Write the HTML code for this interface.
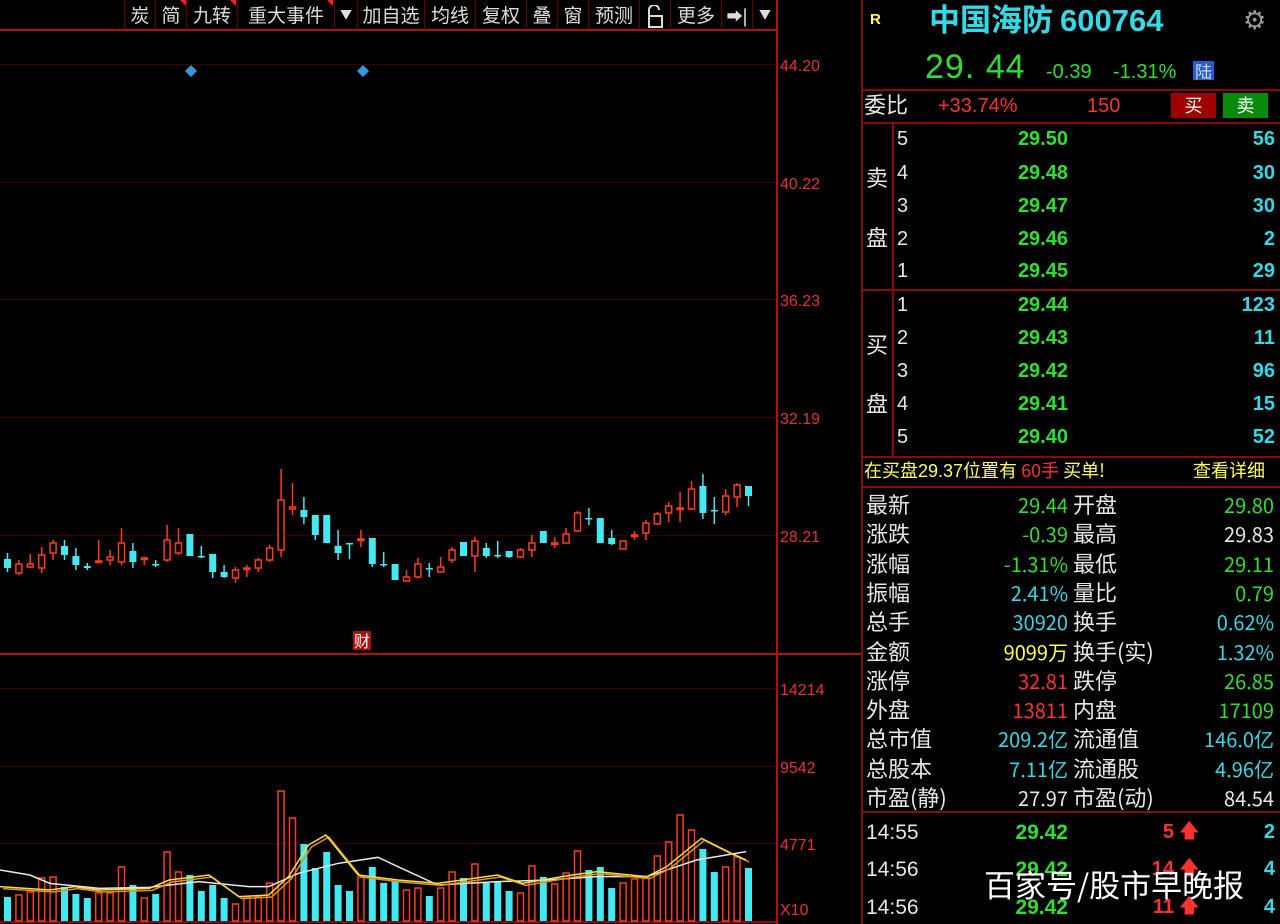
<!DOCTYPE html>
<html><head><meta charset="utf-8"><style>
html,body{margin:0;padding:0;background:#000;width:1280px;height:924px;overflow:hidden;position:relative;font-family:"Liberation Sans","Noto Sans CJK SC",sans-serif}
.t{position:absolute;white-space:nowrap;line-height:1}
.cn{font-family:"Noto Sans CJK SC","WenQuanYi Zen Hei",sans-serif}
.w{color:#e6e6e6}.g{color:#2ee02e}.c{color:#33d9e6}.r{color:#ff3030}.y{color:#ffff55}
.rr{text-align:right}
.b{font-weight:bold}
.tb{position:absolute;top:0;height:30px;line-height:30px;color:#ddd;font-size:19px;font-family:"Noto Sans CJK SC",sans-serif;text-align:center;border-left:1px solid #600;}
.hl{position:absolute;height:2px;background:#8a0a0a}
.vl{position:absolute;width:2px;background:#8a0a0a}
</style></head><body>
<svg id="ch" width="862" height="924" style="position:absolute;left:0;top:0">
<g stroke="#3a0000" stroke-width="1">
<line x1="0" y1="64.5" x2="776" y2="64.5"/><line x1="0" y1="182.5" x2="776" y2="182.5"/><line x1="0" y1="299.5" x2="776" y2="299.5"/><line x1="0" y1="417.5" x2="776" y2="417.5"/><line x1="0" y1="535.5" x2="776" y2="535.5"/>
<line x1="0" y1="688.5" x2="776" y2="688.5"/><line x1="0" y1="766.5" x2="776" y2="766.5"/><line x1="0" y1="843.5" x2="776" y2="843.5"/>
</g>
<line x1="0" y1="30" x2="778" y2="30" stroke="#b01010" stroke-width="2"/>
<line x1="0" y1="654" x2="862" y2="654" stroke="#b01010" stroke-width="2"/>
<line x1="777" y1="0" x2="777" y2="924" stroke="#b01010" stroke-width="2"/>
<line x1="0" y1="922" x2="776" y2="922" stroke="#8a0a0a" stroke-width="2"/>
<g fill="#e83030" font-size="16" font-family="Liberation Sans">
<text x="780" y="71">44.20</text><text x="780" y="189">40.22</text><text x="780" y="306">36.23</text><text x="780" y="424">32.19</text><text x="780" y="542">28.21</text>
<text x="780" y="695">14214</text><text x="780" y="773">9542</text><text x="780" y="850">4771</text><text x="780" y="915">X10</text>
</g>
<path d="M191 65 L197 71 L191 77 L185 71Z M363 65 L369 71 L363 77 L357 71Z" fill="#3399dd"/>
<rect x="353" y="631" width="18" height="19" fill="#b01010"/>
<text x="354" y="647" fill="#fff" font-size="16" font-family="Noto Sans CJK SC">财</text>
<g id="cd"></g><g id="vb"></g><g id="ma"></g>
</svg>
<div class="tb" style="left:124px;width:30px">炭</div>
<div class="tb" style="left:155px;width:30px">简</div>
<div class="tb" style="left:186px;width:50px">九转</div>
<div class="tb" style="left:237px;width:96px">重大事件</div>
<div class="tb" style="left:334px;width:22px;font-size:12px">▼</div>
<div class="tb" style="left:357px;width:66px">加自选</div>
<div class="tb" style="left:424px;width:50px">均线</div>
<div class="tb" style="left:475px;width:50px">复权</div>
<div class="tb" style="left:526px;width:30px">叠</div>
<div class="tb" style="left:557px;width:30px">窗</div>
<div class="tb" style="left:588px;width:50px">预测</div>
<div class="tb" style="left:639px;width:30px"><svg width="20" height="24" style="vertical-align:middle"><path d="M4 11 V5 a5 5 0 0 1 10 0" fill="none" stroke="#ddd" stroke-width="2"/><rect x="4" y="11" width="13" height="11" fill="none" stroke="#ddd" stroke-width="2"/></svg></div>
<div class="tb" style="left:670px;width:50px">更多</div>
<div class="tb" style="left:721px;width:30px;font-size:16px;font-weight:bold">➡|</div>
<div class="tb" style="left:752px;width:24px;font-size:12px">▼</div>
<svg width="680" height="12" style="position:absolute;left:124px;top:0">
<path d="M56 0 L62 0 L62 6Z M106 0 L112 0 L112 6Z M203 0 L209 0 L209 6Z" fill="#ff2020"/></svg>

<div class="vl" style="left:861px;top:0;height:924px"></div>
<div class="t y" style="left:870px;top:12px;font-size:15px;font-weight:bold">R</div>
<div class="t c cn b" style="left:929px;top:2px;font-size:31px">中国海防 <span style="font-family:'Liberation Sans'">600764</span></div>
<div class="t" style="left:1243px;top:7px;font-size:26px;color:#999">⚙</div>
<div class="t g" style="left:925px;top:50px;font-size:34px;letter-spacing:1px">29. 44</div>
<div class="t g" style="left:1046px;top:62px;font-size:20px">-0.39</div>
<div class="t g" style="left:1113px;top:62px;font-size:20px">-1.31%</div>
<div class="t cn" style="left:1193px;top:61px;font-size:17px;background:#2a5ad0;color:#cde;padding:1px 2px">陆</div>
<div class="hl" style="left:862px;top:89px;width:418px"></div>
<div class="t w cn" style="left:864px;top:93px;font-size:22px">委比</div>
<div class="t r" style="left:938px;top:96px;font-size:20px">+33.74%</div>
<div class="t r" style="left:1087px;top:96px;font-size:20px">150</div>
<div class="t cn" style="left:1171px;top:93px;width:45px;height:25px;background:#a00000;color:#fff;font-size:18px;text-align:center;line-height:25px">买</div>
<div class="t cn" style="left:1223px;top:93px;width:45px;height:25px;background:#0a8a0a;color:#fff;font-size:18px;text-align:center;line-height:25px">卖</div>
<div class="hl" style="left:862px;top:122px;width:418px"></div>
<div class="hl" style="left:862px;top:289px;width:418px"></div>
<div class="hl" style="left:862px;top:456px;width:418px"></div>
<div class="hl" style="left:862px;top:486px;width:418px"></div>
<div class="hl" style="left:862px;top:811px;width:418px"></div>
<div class="vl" style="left:892px;top:123px;height:333px"></div>
<div class="t w cn" style="left:866px;top:166px;font-size:22px">卖</div>
<div class="t w cn" style="left:866px;top:226px;font-size:22px">盘</div>
<div class="t w cn" style="left:866px;top:333px;font-size:22px">买</div>
<div class="t w cn" style="left:866px;top:392px;font-size:22px">盘</div>
<div id="ob"></div>
<div class="t y cn" style="left:864px;top:461px;font-size:18px">在买盘<span style="font-family:'Liberation Sans'">29.37</span>位置有 <span class="r">60手</span> 买单!</div>
<div class="t y cn" style="left:1193px;top:461px;font-size:18px">查看详细</div>
<div id="st"></div>
<div id="tk"></div>
<div class="t cn" style="left:984px;top:868px;font-size:31px;color:#fff">百家号/股市早晚报</div>
<script>
var C=[['c',559,568,553,572],['r',564,573,560,575],['r',564,567,554,568],['r',555,568,547,573],['r',543,553,540,560],['c',546,555,540,560],['c',556,565,548,570],['c',566,568,563,570],['r',561,562,540,563],['r',557,560,550,565],['r',543,562,528,565],['c',551,562,543,568],['r',558,559,557,565],['c',564,565,560,567],['r',540,560,525,562],['r',543,553,528,555],['c',534,556,534,556],['c',556,557,546,558],['c',554,572,554,578],['c',572,577,565,578],['r',570,578,567,583],['r',568,569,565,577],['r',560,568,558,572],['r',548,560,545,562],['r',500,550,469,557],['r',507,509,483,515],['c',510,517,497,524],['c',515,535,515,540],['c',515,543,515,543],['c',546,553,530,560],['c',543,544,543,559],['r',539,540,530,547],['c',538,564,538,567],['c',564,565,552,567],['c',564,580,564,580],['r',577,581,570,581],['r',564,577,558,578],['c',568,569,563,577],['r',567,572,557,573],['r',550,560,547,563],['c',542,556,542,556],['r',541,556,537,572],['c',548,556,543,558],['c',555,556,541,558],['c',551,557,551,558],['r',550,557,548,558],['r',543,550,535,557],['c',531,543,531,543],['r',543,544,537,548],['r',534,543,528,543],['r',513,531,511,532],['c',518,519,508,525],['c',518,543,518,543],['c',538,544,530,545],['r',541,549,541,549],['r',535,536,531,540],['r',523,533,520,540],['r',514,524,512,525],['r',506,513,502,522],['r',508,509,492,522],['r',489,509,481,510],['c',486,513,474,519],['c',510,511,497,524],['r',496,512,489,515],['r',485,497,483,507],['c',486,496,486,506]];
var V=[897,895,892,878,877,887,894,898,893,893,867,885,898,894,852,872,875,891,885,898,904,897,897,883,791,818,844,868,852,885,891,877,867,883,881,890,888,896,888,872,878,864,883,881,891,893,866,877,884,873,851,870,867,888,883,879,877,856,842,815,830,849,872,867,857,868];
var RC='#ff3a1a',CC='#44e8f0',s='',v='';
C.forEach(function(d,i){var x=7.5+i*11.4,col=d[0]=='r'?RC:CC;
s+='<line x1="'+x+'" y1="'+d[3]+'" x2="'+x+'" y2="'+d[4]+'" stroke="'+col+'" stroke-width="1.5"/>';
var h=Math.max(d[2]-d[1],1.5);
if(d[0]=='r')s+='<rect x="'+(x-3)+'" y="'+d[1]+'" width="6" height="'+h+'" fill="#000" stroke="'+col+'" stroke-width="1.5"/>';
else s+='<rect x="'+(x-3.5)+'" y="'+d[1]+'" width="7" height="'+h+'" fill="'+col+'"/>';
var t=V[i];
if(d[0]=='r')v+='<rect x="'+(x-3)+'" y="'+t+'" width="6" height="'+(921-t)+'" fill="none" stroke="'+RC+'" stroke-width="1.5"/>';
else v+='<rect x="'+(x-3.5)+'" y="'+t+'" width="7" height="'+(921-t)+'" fill="'+CC+'"/>';});
document.getElementById('cd').innerHTML=s;document.getElementById('vb').innerHTML=v;
function pl(p,c){return '<polyline fill="none" stroke="'+c+'" stroke-width="1.5" points="'+p.map(function(q){return (q[0]*0.4975)+','+(q[1]/3+780)}).join(' ')+'"/>';}
var W=[[0,270],[60,285],[100,310],[200,325],[300,322],[400,305],[500,320],[540,320],[600,280],[680,250],[760,232],[800,260],[880,315],[1000,305],[1100,300],[1200,290],[1300,290],[1400,240],[1500,215]];
var Y=[[0,320],[100,330],[150,320],[200,330],[300,325],[340,300],[420,285],[480,350],[540,345],[580,290],[620,195],[655,165],[720,285],[800,300],[880,310],[1000,285],[1050,310],[1150,285],[1200,275],[1300,290],[1340,260],[1410,175],[1470,220],[1500,240]];
var O=Y.map(function(q){return [q[0]+6,q[1]+6]});
document.getElementById('ma').innerHTML=pl(W,'#e8e8e8')+pl(O,'#e89020')+pl(Y,'#f0e040');
var ob='',sp=[['5','29.50','56',140],['4','29.48','30',174],['3','29.47','30',207],['2','29.46','2',240],['1','29.45','29',272],['1','29.44','123',306],['2','29.43','11',339],['3','29.42','96',372],['4','29.41','15',405],['5','29.40','52',438]];
sp.forEach(function(a){var t=a[3]-11;ob+='<div class="t w" style="left:897px;top:'+t+'px;font-size:20px">'+a[0]+'</div><div class="t g rr b" style="left:968px;width:100px;top:'+t+'px;font-size:20px">'+a[1]+'</div><div class="t c rr b" style="left:1175px;width:100px;top:'+t+'px;font-size:20px">'+a[2]+'</div>';});
document.getElementById('ob').innerHTML=ob;
var S=[['最新','29.44','g','开盘','29.80','g'],['涨跌','-0.39','g','最高','29.83','w'],['涨幅','-1.31%','g','最低','29.11','g'],['振幅','2.41%','c','量比','0.79','g'],['总手','30920','c','换手','0.62%','c'],['金额','9099万','y','换手(实)','1.32%','c'],['涨停','32.81','r','跌停','26.85','g'],['外盘','13811','r','内盘','17109','g'],['总市值','209.2亿','c','流通值','146.0亿','c'],['总股本','7.11亿','c','流通股','4.96亿','c'],['市盈(静)','27.97','w','市盈(动)','84.54','w']];
var st='';S.forEach(function(a,i){var t=Math.round(493+i*29.3);
st+='<div class="t w cn" style="left:866px;top:'+t+'px;font-size:22px">'+a[0]+'</div><div class="t '+a[2]+' rr cn" style="left:948px;width:120px;top:'+(t+2)+'px;font-size:20px">'+a[1]+'</div><div class="t w cn" style="left:1073px;top:'+t+'px;font-size:22px">'+a[3]+'</div><div class="t '+a[5]+' rr cn" style="left:1154px;width:120px;top:'+(t+2)+'px;font-size:20px">'+a[4]+'</div>';});
document.getElementById('st').innerHTML=st;
var T=[['14:55','5','2',833],['14:56','14','4',870],['14:56','11','4',908]],tk='';
T.forEach(function(a){var t=a[3]-11;tk+='<div class="t w" style="left:866px;top:'+t+'px;font-size:21px">'+a[0]+'</div><div class="t g rr b" style="left:968px;width:100px;top:'+t+'px;font-size:21px">29.42</div><div class="t r rr b" style="left:1100px;width:74px;top:'+t+'px;font-size:20px">'+a[1]+'</div><div class="t r" style="left:1179px;top:'+(t-1)+'px;font-size:20px">🡅︎</div><div class="t c rr b" style="left:1235px;width:40px;top:'+t+'px;font-size:20px">'+a[2]+'</div>';});
document.getElementById('tk').innerHTML=tk;
</script>
</body></html>
